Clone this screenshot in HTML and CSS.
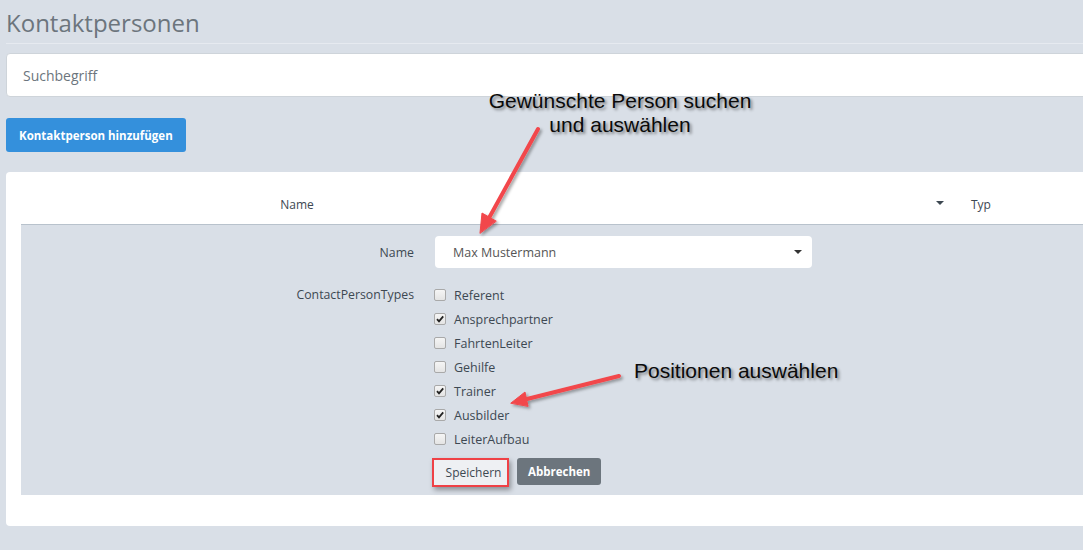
FILE: index.html
```html
<!DOCTYPE html>
<html>
<head>
    <meta charset="utf-8">
    <meta name="viewport" content="width=device-width, initial-scale=1">
    <title>Kontaktpersonen</title>
    <link rel="stylesheet" href="styles.css">
</head>
<body>
    <div class="page">
        <h1 class="page-title">Kontaktpersonen</h1>

        <div class="search">
            <input type="text" class="search-input" placeholder="Suchbegriff">
        </div>

        <button class="btn btn-primary">Kontaktperson hinzufügen</button>

        <div class="card">
            <div class="table-head">
                <div class="th th-name">Name</div>
                <div class="th th-sort"><span class="caret"></span></div>
                <div class="th th-type">Typ</div>
            </div>

            <div class="edit-row">
                <div class="form-label">Name</div>
                <div class="form-control">
                    <div class="select">
                        <span>Max Mustermann</span>
                        <span class="caret caret-dark"></span>
                    </div>
                </div>

                <div class="form-label form-label-top">ContactPersonTypes</div>
                <div class="form-control">
                    <ul class="checklist">
                        <li><span class="box"></span>Referent</li>
                        <li><span class="box checked"><svg viewBox="0 0 10 10"><path d="M2 5.2 L4 7.4 L8.2 2.4" /></svg></span>Ansprechpartner</li>
                        <li><span class="box"></span>FahrtenLeiter</li>
                        <li><span class="box"></span>Gehilfe</li>
                        <li><span class="box checked"><svg viewBox="0 0 10 10"><path d="M2 5.2 L4 7.4 L8.2 2.4" /></svg></span>Trainer</li>
                        <li><span class="box checked"><svg viewBox="0 0 10 10"><path d="M2 5.2 L4 7.4 L8.2 2.4" /></svg></span>Ausbilder</li>
                        <li><span class="box"></span>LeiterAufbau</li>
                    </ul>
                    <div class="actions">
                        <button class="btn btn-save">Speichern</button>
                        <button class="btn btn-secondary">Abbrechen</button>
                    </div>
                </div>
            </div>
        </div>
    </div>

    <!-- annotations drawn over the screenshot -->
    <div class="note note-search">Gewünschte Person suchen<br>und auswählen</div>
    <div class="note note-types">Positionen auswählen</div>
    <svg class="arrows" width="1083" height="550" viewBox="0 0 1083 550">
        <defs>
            <filter id="shadow" x="-20%" y="-20%" width="140%" height="140%">
                <feDropShadow dx="2" dy="2" stdDeviation="1.5" flood-color="#000" flood-opacity="0.35"/>
            </filter>
        </defs>
        <g filter="url(#shadow)" fill="#f2474b" stroke="#f2474b" stroke-linecap="round" stroke-linejoin="round">
            <line x1="538" y1="129" x2="489" y2="218" stroke-width="4"/>
            <polygon points="480,233 482,213 496,221" stroke-width="1"/>
            <line x1="619" y1="376" x2="527" y2="399" stroke-width="4"/>
            <polygon points="511,403 525,392 528,406" stroke-width="1"/>
        </g>
    </svg>
</body>
</html>
```

FILE: styles.css
```css
body {
    margin: 0;
    background-color: #d9dfe7;
    font-family: "Open Sans", "Liberation Sans", sans-serif;
    color: #3d4852;
    overflow: hidden;
}
.page {
    width: 1110px;
    padding: 0 6px;
}
.page-title {
    margin: 0;
    padding-top: 8px;
    height: 35px;
    font-size: 24px;
    line-height: 30px;
    font-weight: normal;
    color: #6c757d;
    border-bottom: 1px solid #e6eaf0;
}
.search {
    margin-top: 9px;
}
.search-input {
    box-sizing: border-box;
    width: 100%;
    height: 44px;
    padding: 0 16px;
    border: 1px solid #ced4da;
    border-radius: 4px;
    background: #fff;
    font-family: "Open Sans", sans-serif;
    font-size: 14px;
    outline: none;
}
.search-input::placeholder {
    color: #6c757d;
}
.btn {
    font-family: "Open Sans", sans-serif;
    border: none;
    cursor: pointer;
}
.btn-primary {
    display: block;
    margin-top: 21px;
    height: 34px;
    padding: 0 13px;
    background-color: #3490dc;
    color: #fff;
    font-size: 11.5px;
    font-weight: bold;
    border-radius: 3px;
}
.card {
    margin-top: 20px;
    background: #fff;
    border-radius: 4px;
    padding: 0 0 31px 15px;
}
.table-head {
    display: flex;
    align-items: center;
    height: 52px;
    border-bottom: 1px solid #b8c2cc;
    font-size: 12px;
    color: #3d4852;
}
.th-name {
    width: 552px;
    text-align: center;
    padding-top: 13px;
}
.th-sort {
    width: 371px;
    display: flex;
    justify-content: flex-end;
    padding-top: 10px;
}
.th-type {
    padding-left: 27px;
    padding-top: 13px;
}
.caret {
    width: 0;
    height: 0;
    border-left: 4px solid transparent;
    border-right: 4px solid transparent;
    border-top: 4px solid #3d4852;
}
.edit-row {
    background: #d9dfe7;
    display: grid;
    grid-template-columns: 393px 1fr;
    column-gap: 21px;
    padding: 11px 0 8px;
    font-size: 12.3px;
}
.form-label {
    text-align: right;
    align-self: center;
    color: #3d4852;
}
.form-label-top {
    align-self: start;
    padding-top: 18px;
}
.select {
    box-sizing: border-box;
    width: 377px;
    height: 32px;
    background: #fff;
    border-radius: 4px;
    display: flex;
    align-items: center;
    justify-content: space-between;
    padding: 0 10px 0 18px;
    color: #555;
    font-size: 12.5px;
}
.caret-dark {
    border-top-color: #333;
}
.checklist {
    list-style: none;
    margin: 15px 0 0 0;
    padding: 0;
}
.checklist li {
    display: flex;
    align-items: center;
    height: 24px;
    color: #3d4852;
    font-size: 12.5px;
}
.box {
    box-sizing: border-box;
    width: 12px;
    height: 12px;
    margin: 0 8px 0 -1px;
    border: 1px solid #a9a9a9;
    border-radius: 2px;
    background: linear-gradient(#f5f5f5, #e4e4e4);
    display: flex;
    align-items: center;
    justify-content: center;
}
.box svg {
    width: 10px;
    height: 10px;
    fill: none;
    stroke: #222;
    stroke-width: 1.8;
}
.actions {
    display: flex;
    gap: 8px;
    margin-top: 7px;
    margin-left: -3px;
}
.btn-save {
    box-sizing: border-box;
    width: 77px;
    height: 29px;
    padding: 0 0 0 6px;
    background: #eef0f3;
    border: 2px solid #ef4146;
    color: #3d4852;
    font-size: 12px;
    box-shadow: 2px 3px 5px rgba(0, 0, 0, 0.35);
}
.btn-secondary {
    height: 27px;
    padding: 0 11px;
    background: #6c757d;
    color: #fff;
    font-size: 11.5px;
    font-weight: bold;
    border-radius: 3px;
}
.note {
    position: absolute;
    font-family: "Liberation Sans", Arial, sans-serif;
    font-size: 21px;
    line-height: 24px;
    color: #0a0a0a;
    text-shadow: 2px 2px 3px rgba(0, 0, 0, 0.45);
}
.note-search {
    top: 89px;
    left: 460px;
    width: 320px;
    text-align: center;
}
.note-types {
    top: 359px;
    left: 634px;
}
.arrows {
    position: absolute;
    top: 0;
    left: 0;
    pointer-events: none;
}
```
